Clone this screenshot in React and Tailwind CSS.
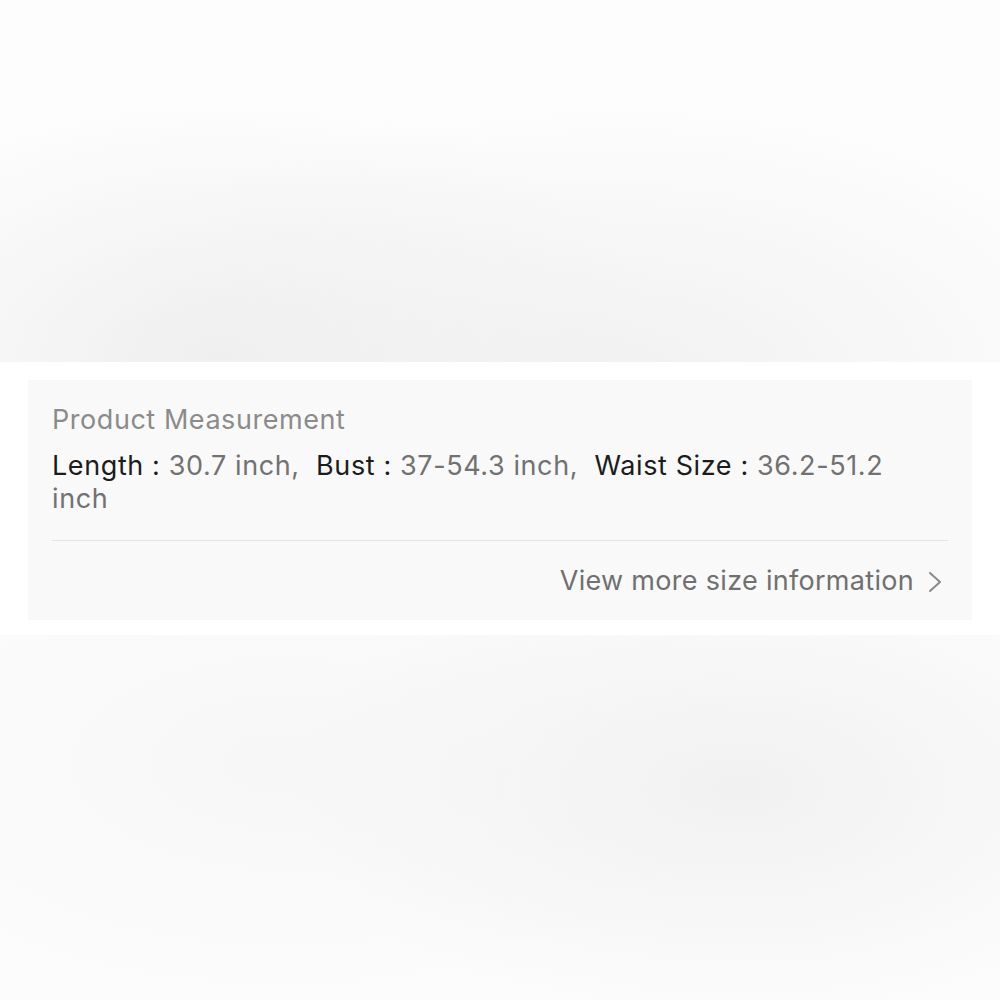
const font = { fontFamily: 'Inter, "Noto Sans", sans-serif' }

function Measure({ label, value, last }) {
  return (
    <>
      <span className="text-[#1c1c1c]">{label} :</span>{' '}
      <span className="text-[#727272]">{value}{last ? '' : ','}</span>
      {!last && <span>{'\u00a0 '}</span>}
    </>
  )
}

export default function App() {
  return (
    <div className="w-[1000px] h-[1000px] flex flex-col bg-white" style={font}>
      <div className="h-[362px] bg-[radial-gradient(ellipse_45%_75%_at_22%_100%,#efefef,rgba(252,252,252,0)),radial-gradient(ellipse_55%_80%_at_62%_105%,#f1f1f1,#fdfdfd)]" />
      <div className="px-[28px] pt-[18px] pb-[15px]">
        <div className="h-[240px] bg-[#f9f9f9] px-[24px] flex flex-col">
          <div className="pt-[23px] text-[27px] leading-[34px] tracking-[0.55px] text-[#8b8b8b]">Product Measurement</div>
          <p className="mt-[12px] text-[27px] leading-[33px] tracking-[0.6px] pr-[40px]">
            <Measure label="Length" value="30.7 inch" />
            <Measure label="Bust" value="37-54.3 inch" />
            <Measure label="Waist Size" value="36.2-51.2" last />{' '}
            <span className="text-[#727272]">inch</span>
          </p>
          <div className="mt-[25px] h-px bg-[#e4e4e4]" />
          <div className="flex-1 flex items-center justify-end gap-[14px] text-[27px] text-[#707070] tracking-[0.3px] pt-[2px]">
            <span>View more size information</span>
            <svg width="14" height="22" viewBox="0 0 14 22" fill="none" className="mr-[6px]">
              <path d="M2 2l10 9-10 9" stroke="#8a8a8a" strokeWidth="2" strokeLinecap="round" strokeLinejoin="round" />
            </svg>
          </div>
        </div>
      </div>
      <div className="flex-1 bg-[radial-gradient(ellipse_45%_65%_at_74%_42%,#f1f1f1,rgba(252,252,252,0)),radial-gradient(ellipse_50%_70%_at_28%_35%,#f7f7f7,#fcfcfc)]" />
    </div>
  )
}
